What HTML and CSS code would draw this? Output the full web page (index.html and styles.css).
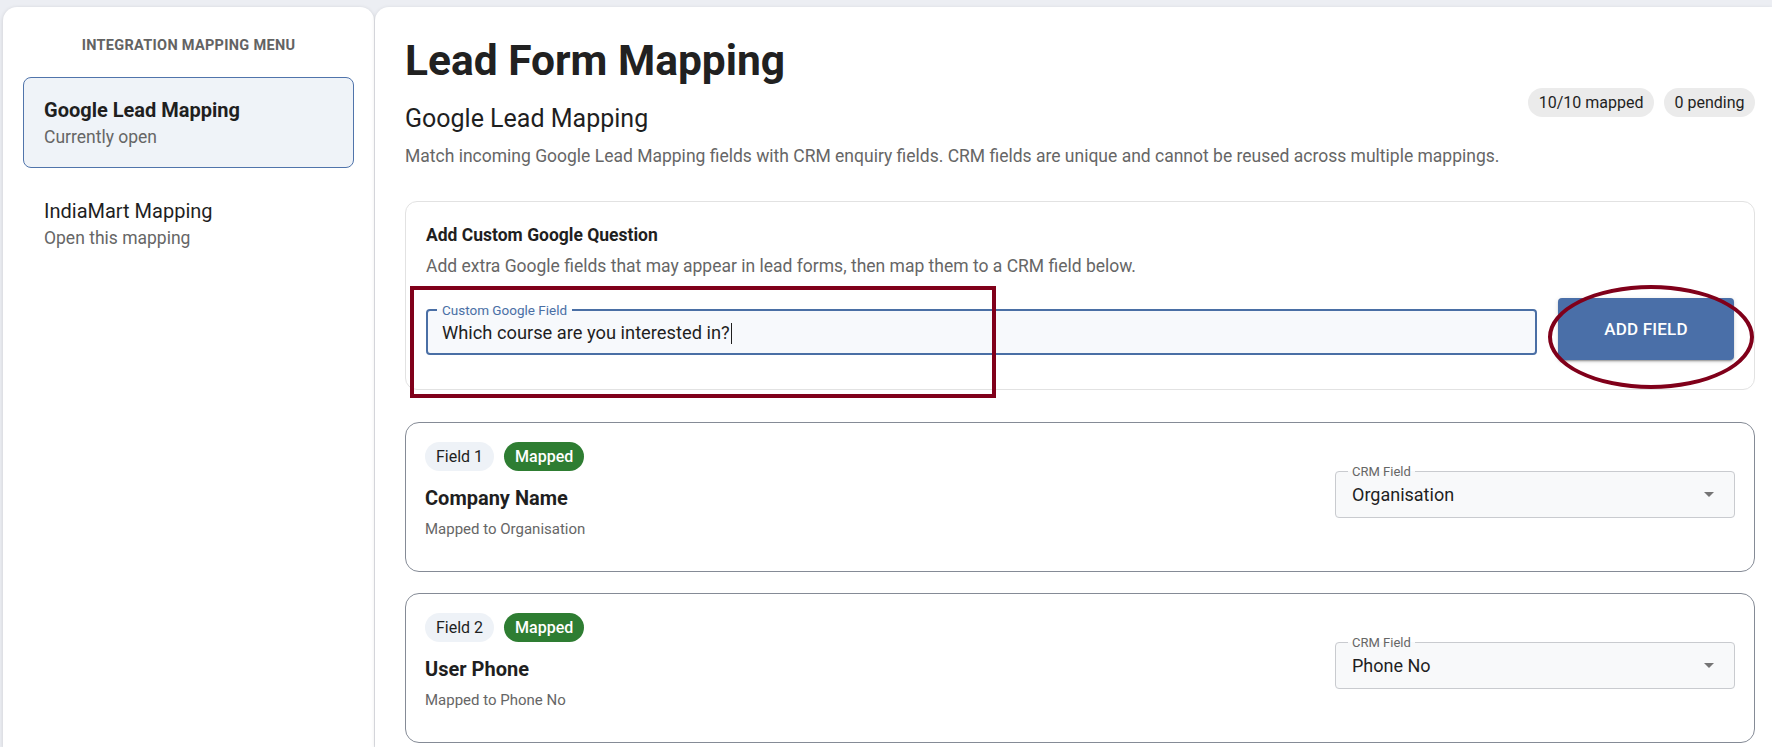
FILE: index.html
```html
<!DOCTYPE html>
<html lang="en">
<head>
<meta charset="utf-8">
<title>Lead Form Mapping</title>
<link rel="stylesheet" href="styles.css">
</head>
<body>
<div class="layout">
  <aside class="sidebar">
    <div class="menu-title">INTEGRATION MAPPING MENU</div>
    <nav class="menu">
      <a class="menu-item active" href="#">
        <span class="item-title">Google Lead Mapping</span>
        <span class="item-sub">Currently open</span>
      </a>
      <a class="menu-item" href="#">
        <span class="item-title">IndiaMart Mapping</span>
        <span class="item-sub">Open this mapping</span>
      </a>
    </nav>
  </aside>

  <main class="main">
    <header class="intro">
      <div class="intro-text">
        <h1 class="page-title">Lead Form Mapping</h1>
        <h2 class="page-subtitle">Google Lead Mapping</h2>
        <p class="page-desc">Match incoming Google Lead Mapping fields with CRM enquiry fields. CRM fields are unique and cannot be reused across multiple mappings.</p>
      </div>
      <div class="stats">
        <span class="stat">10/10 mapped</span>
        <span class="stat">0 pending</span>
      </div>
    </header>

    <section class="custom-card">
      <h3 class="custom-title">Add Custom Google Question</h3>
      <p class="custom-desc">Add extra Google fields that may appear in lead forms, then map them to a CRM field below.</p>
      <div class="custom-row">
        <fieldset class="text-field">
          <legend class="text-label">Custom Google Field</legend>
          <div class="field-value">Which course are you interested in?<span class="caret"></span></div>
        </fieldset>
        <button class="add-btn" type="button">ADD FIELD</button>
      </div>
      <div class="annot-rect"></div>
      <div class="annot-ellipse"></div>
    </section>

    <div class="field-list">
      <section class="field-card">
        <div class="field-info">
          <div class="chips">
            <span class="chip chip-field">Field 1</span>
            <span class="chip chip-mapped">Mapped</span>
          </div>
          <div class="field-name">Company Name</div>
          <div class="field-note">Mapped to Organisation</div>
        </div>
        <fieldset class="select-field">
          <legend class="select-label">CRM Field</legend>
          <div class="select-row">
            <span class="select-value">Organisation</span>
            <svg class="select-arrow" width="10" height="5" viewBox="0 0 10 5"><path d="M0 0h10L5 5z" fill="#757575"/></svg>
          </div>
        </fieldset>
      </section>

      <section class="field-card">
        <div class="field-info">
          <div class="chips">
            <span class="chip chip-field">Field 2</span>
            <span class="chip chip-mapped">Mapped</span>
          </div>
          <div class="field-name">User Phone</div>
          <div class="field-note">Mapped to Phone No</div>
        </div>
        <fieldset class="select-field">
          <legend class="select-label">CRM Field</legend>
          <div class="select-row">
            <span class="select-value">Phone No</span>
            <svg class="select-arrow" width="10" height="5" viewBox="0 0 10 5"><path d="M0 0h10L5 5z" fill="#757575"/></svg>
          </div>
        </fieldset>
      </section>
    </div>
  </main>
</div>
</body>
</html>
```

FILE: styles.css
```css
* { box-sizing: border-box; }

html, body {
  margin: 0;
  height: 100%;
}

body {
  background: #eceef3;
  font-family: Roboto, "Liberation Sans", Arial, sans-serif;
  color: #1f1f1f;
  overflow: hidden;
}

.layout {
  display: grid;
  grid-template-columns: 371px 1fr;
  column-gap: 1px;
  padding: 7px 0 0 3px;
  height: 100vh;
}

/* Sidebar */
.sidebar {
  background: #fff;
  border-radius: 14px 14px 0 0;
  box-shadow: 0 1px 4px rgba(0, 0, 0, 0.14);
  padding: 29px 20px 0;
}

.menu-title {
  text-align: center;
  font-size: 14.5px;
  line-height: 20px;
  font-weight: 700;
  letter-spacing: 0.3px;
  color: #636363;
}

.menu {
  margin-top: 21px;
  display: flex;
  flex-direction: column;
  gap: 10px;
}

.menu-item {
  display: flex;
  flex-direction: column;
  padding: 19px 20px 18px;
  border: 1px solid transparent;
  border-radius: 8px;
  text-decoration: none;
}

.menu-item.active {
  background: #eff3f8;
  border-color: #5074ab;
}

.item-title {
  font-size: 20px;
  line-height: 27px;
  color: #1f1f1f;
}

.menu-item.active .item-title { font-weight: 700; }

.item-sub {
  font-size: 17.5px;
  line-height: 24px;
  margin-top: 1px;
  color: #666;
}

/* Main */
.main {
  background: #fff;
  border-radius: 14px 0 0 0;
  box-shadow: 0 1px 4px rgba(0, 0, 0, 0.12);
  padding: 28px 17px 0 30px;
  min-width: 0;
}

.intro {
  display: flex;
  align-items: center;
  gap: 24px;
}

.intro-text { flex: 1; min-width: 0; }

.page-title {
  margin: 0;
  font-size: 42.5px;
  line-height: 52px;
  font-weight: 700;
  color: #212121;
}

.page-subtitle {
  margin: 16px 0 0;
  font-size: 25px;
  line-height: 32px;
  font-weight: 400;
  color: #1f1f1f;
}

.page-desc {
  margin: 9px 0 0;
  font-size: 17.5px;
  line-height: 25px;
  color: #666;
}

.stats {
  display: flex;
  gap: 10px;
}

.stat {
  height: 29px;
  line-height: 29px;
  padding: 0 10.5px;
  border-radius: 15px;
  background: #ebebeb;
  font-size: 16px;
  color: #1f1f1f;
  white-space: nowrap;
}

/* Custom question card */
.custom-card {
  position: relative;
  margin-top: 32px;
  border: 1px solid #e2e2e2;
  border-radius: 12px;
  padding: 21px 20px 29px;
}

.custom-title {
  margin: 0;
  font-size: 17.5px;
  line-height: 24px;
  font-weight: 700;
  color: #1f1f1f;
}

.custom-desc {
  margin: 7px 0 0;
  font-size: 17.5px;
  line-height: 24px;
  color: #666;
}

.custom-row {
  display: flex;
  align-items: center;
  gap: 21px;
  margin-top: 20px;
}

.text-field {
  flex: 1;
  min-width: 0;
  margin: 0;
  border: 2px solid #4a6fa5;
  border-radius: 4px;
  padding: 4px 14px 8px;
  background: #f7f9fc;
}

.text-label {
  font-size: 13.5px;
  line-height: 13px;
  padding: 0 5px;
  margin-left: -5px;
  color: #4a6fa5;
}

.field-value {
  font-size: 18.3px;
  line-height: 24px;
  color: #1f1f1f;
}

.caret {
  display: inline-block;
  width: 1px;
  height: 21px;
  margin-left: 1px;
  background: #1f1f1f;
  vertical-align: -5px;
}

.add-btn {
  flex: none;
  width: 176px;
  height: 62px;
  border: none;
  border-radius: 4px;
  background: #4a6fa8;
  color: #fff;
  font-family: inherit;
  font-size: 17px;
  font-weight: 500;
  letter-spacing: 0.2px;
  box-shadow: 0 3px 1px -2px rgba(0, 0, 0, 0.2), 0 2px 2px 0 rgba(0, 0, 0, 0.14), 0 1px 5px 0 rgba(0, 0, 0, 0.12);
}

.annot-rect {
  position: absolute;
  left: 4px;
  top: 84px;
  width: 586px;
  height: 112px;
  border: 4px solid #80001a;
}

.annot-ellipse {
  position: absolute;
  left: 1142px;
  top: 83px;
  width: 206px;
  height: 104px;
  border: 4px solid #80001a;
  border-radius: 50%;
}

/* Field cards */
.field-list {
  margin-top: 32px;
  display: flex;
  flex-direction: column;
  gap: 21px;
}

.field-card {
  display: flex;
  align-items: center;
  justify-content: space-between;
  border: 1px solid #858b96;
  border-radius: 14px;
  padding: 19px 19px 31px;
}

.chips {
  display: flex;
  gap: 10px;
}

.chip {
  height: 29px;
  line-height: 29px;
  padding: 0 11px;
  border-radius: 15px;
  font-size: 16px;
}

.chip-field {
  background: #eef2f7;
  color: #1f1f1f;
}

.chip-mapped {
  background: #2e7d32;
  color: #fff;
  font-weight: 500;
}

.field-name {
  margin-top: 14px;
  font-size: 20px;
  line-height: 26px;
  font-weight: 700;
  color: #1f1f1f;
}

.field-note {
  margin-top: 7px;
  font-size: 15px;
  line-height: 22px;
  color: #666;
}

.select-field {
  width: 400px;
  margin: 0;
  border: 1px solid #c9cbcf;
  border-radius: 4px;
  padding: 5px 16px 10px;
  background: #f8f9fa;
}

.select-label {
  font-size: 13px;
  line-height: 13px;
  padding: 0 4px;
  margin-left: -4px;
  color: #666;
}

.select-row {
  display: flex;
  align-items: center;
  justify-content: space-between;
}

.select-value {
  font-size: 18px;
  line-height: 24px;
  color: #1f1f1f;
}

.select-arrow {
  display: block;
  margin-right: 4px;
}
```
